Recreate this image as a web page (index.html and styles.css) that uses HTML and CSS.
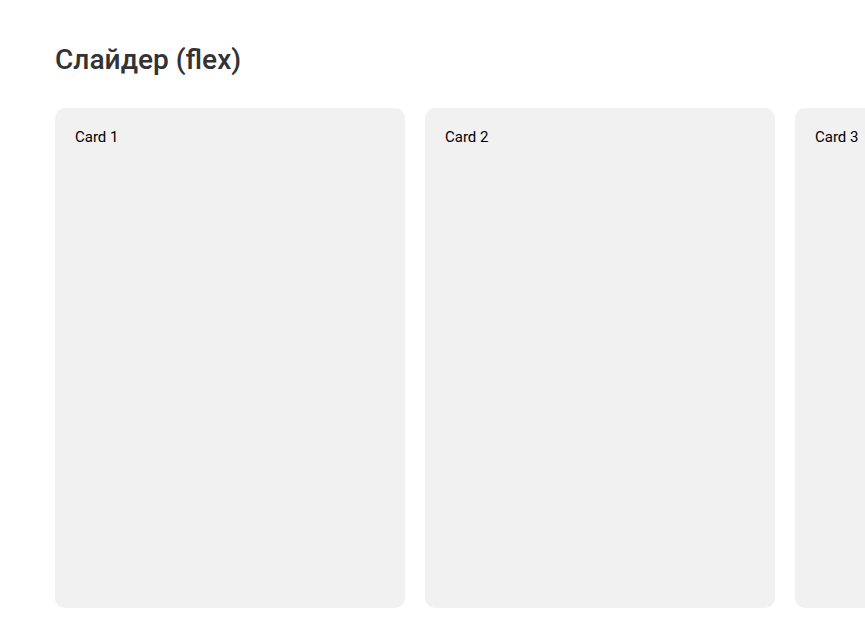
FILE: index.html
```html
<!DOCTYPE html>
<html lang="ru">
<head>
<meta charset="utf-8">
<link rel="stylesheet" href="styles.css">
</head>
<body>
<main class="page">
  <h1 class="title">Слайдер (flex)</h1>
  <div class="slider">
    <div class="card">Card 1</div>
    <div class="card">Card 2</div>
    <div class="card">Card 3</div>
  </div>
</main>
</body>
</html>
```
FILE: styles.css
```css
html, body {
  margin: 0;
  padding: 0;
  background: #fff;
  overflow: hidden;
}
body {
  font-family: Roboto, "Noto Sans", sans-serif;
}
.page {
  padding: 44px 0 0 55px;
}
.title {
  margin: 0 0 32px;
  font-family: "Roboto Medium", Roboto, sans-serif;
  font-size: 28px;
  font-weight: 500;
  line-height: 32px;
  color: #333;
}
.slider {
  display: flex;
  gap: 20px;
  overflow: hidden;
}
.card {
  flex: 0 0 350px;
  height: 500px;
  box-sizing: border-box;
  padding: 20px;
  background: #f1f1f1;
  border-radius: 10px;
  font-size: 15px;
  line-height: 18px;
  color: #000;
}
```
